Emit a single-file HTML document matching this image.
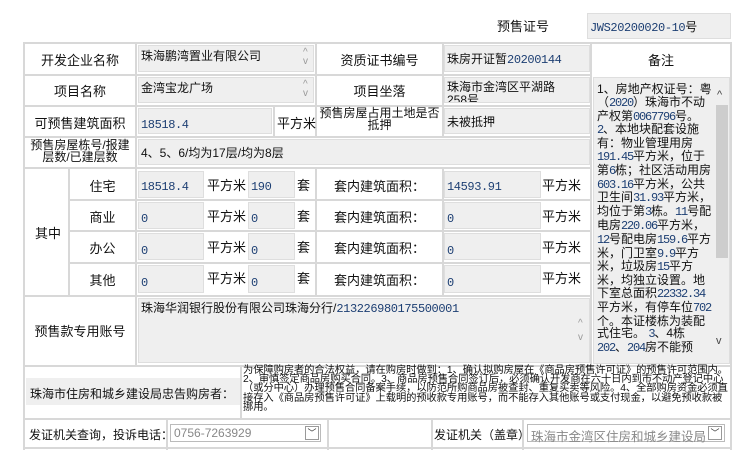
<!DOCTYPE html>
<html><head><meta charset="utf-8"><style>
*{margin:0;padding:0;box-sizing:border-box}
body{width:750px;height:450px;background:#fff;position:relative;overflow:hidden;font-family:"Liberation Sans","Noto Sans CJK SC","WenQuanYi Zen Hei",sans-serif;font-size:12px;color:#111}
div{position:absolute}
.h{height:2px;background:#d8d8d8}
.v{width:2px;background:#d8d8d8}
.f{background:#efefef;border:1px solid #dedede;padding:3px 2px;white-space:nowrap;overflow:hidden;line-height:14px}
.n{color:#1d3f73;font-family:"Liberation Mono",monospace;letter-spacing:-0.4px}
.r .n{letter-spacing:-1.2px}
.c{text-align:center}
.sb{color:#999;font-size:10px;line-height:9px}
</style></head><body>
<div style="left:497px;top:16px;font-size:13px">预售证号</div>
<div class="f" style="left:587px;top:13px;width:144px;height:26px;padding-top:6px"><span class="n">JWS20200020-10</span>号</div>

<div class="h" style="left:23px;top:42px;width:709px"></div>
<div class="h" style="left:23px;top:74px;width:568px"></div>
<div class="h" style="left:23px;top:105px;width:568px"></div>
<div class="h" style="left:23px;top:136px;width:568px"></div>
<div class="h" style="left:23px;top:167px;width:568px"></div>
<div class="h" style="left:69px;top:199px;width:522px"></div>
<div class="h" style="left:69px;top:230px;width:522px"></div>
<div class="h" style="left:69px;top:262px;width:522px"></div>
<div class="h" style="left:23px;top:295px;width:568px"></div>
<div class="h" style="left:23px;top:365px;width:709px"></div>
<div class="h" style="left:23px;top:418px;width:709px"></div>
<div class="h" style="left:23px;top:447px;width:709px"></div>
<div class="v" style="left:23px;top:42px;height:408px"></div>
<div class="v" style="left:730px;top:42px;height:408px"></div>
<div class="v" style="left:135px;top:42px;height:324px"></div>
<div class="v" style="left:315px;top:42px;height:94px"></div>
<div class="v" style="left:442px;top:42px;height:94px"></div>
<div class="v" style="left:590px;top:42px;height:324px"></div>
<div class="v" style="left:273px;top:105px;height:31px"></div>
<div class="v" style="left:68px;top:167px;height:128px"></div>
<div class="v" style="left:315px;top:167px;height:128px"></div>
<div class="v" style="left:442px;top:167px;height:128px"></div>
<div class="v" style="left:240px;top:365px;height:53px"></div>
<div class="v" style="left:166px;top:418px;height:32px"></div>
<div class="v" style="left:327px;top:418px;height:32px"></div>
<div class="v" style="left:431px;top:418px;height:32px"></div>
<div class="v" style="left:522px;top:418px;height:32px"></div>

<div class="c" style="left:25px;top:50px;width:110px;font-size:13px">开发企业名称</div>
<div class="f" style="left:138px;top:45px;width:176px;height:27px">珠海鹏湾置业有限公司</div>
<div class="sb" style="left:303px;top:48px">^<br>v</div>
<div class="c" style="left:317px;top:50px;width:125px;font-size:13px">资质证书编号</div>
<div class="f" style="left:444px;top:45px;width:146px;height:27px;padding-top:6px">珠房开证暂<span class="n">20200144</span></div>
<div class="c" style="left:592px;top:50px;width:138px;font-size:13px">备注</div>
<div class="c" style="left:25px;top:81px;width:110px;font-size:13px">项目名称</div>
<div class="f" style="left:138px;top:77px;width:176px;height:26px">金湾宝龙广场</div>
<div class="sb" style="left:303px;top:80px">^<br>v</div>
<div class="c" style="left:317px;top:81px;width:125px;font-size:13px">项目坐落</div>
<div class="f" style="left:444px;top:77px;width:146px;height:26px;line-height:13px">珠海市金湾区平湖路<br>258号</div>
<div class="c" style="left:25px;top:113px;width:110px;font-size:13px">可预售建筑面积</div>
<div class="f" style="left:138px;top:108px;width:134px;height:26px;padding-top:8px"><span class="n">18518.4</span></div>
<div style="left:277px;top:113px;font-size:13px">平方米</div>
<div class="c" style="left:317px;top:107px;width:125px;line-height:12px">预售房屋占用土地是否<br>抵押</div>
<div class="f" style="left:444px;top:108px;width:146px;height:26px;padding-top:6px">未被抵押</div>
<div class="c" style="left:25px;top:139px;width:110px;line-height:12px;font-size:12px">预售房屋栋号/报建<br>层数/已建层数</div>
<div class="f" style="left:138px;top:139px;width:452px;height:26px;padding-top:6px">4、5、6/均为17层/均为8层</div>

<div style="left:35px;top:223px;font-size:13px">其中</div>
<div class="c" style="left:70px;top:176px;width:65px;font-size:13px">住宅</div>
<div class="c" style="left:70px;top:207px;width:65px;font-size:13px">商业</div>
<div class="c" style="left:70px;top:238px;width:65px;font-size:13px">办公</div>
<div class="c" style="left:70px;top:270px;width:65px;font-size:13px">其他</div>

<div class="f" style="left:138px;top:171px;width:66px;height:27px;padding-top:7px"><span class="n">18518.4</span></div>
<div class="f" style="left:138px;top:202px;width:66px;height:27px;padding-top:8px"><span class="n">0</span></div>
<div class="f" style="left:138px;top:233px;width:66px;height:27px;padding-top:9px"><span class="n">0</span></div>
<div class="f" style="left:138px;top:265px;width:66px;height:28px;padding-top:9px"><span class="n">0</span></div>
<div style="left:207px;top:175px;font-size:13px">平方米</div>
<div style="left:207px;top:206px;font-size:13px">平方米</div>
<div style="left:207px;top:237px;font-size:13px">平方米</div>
<div style="left:207px;top:268px;font-size:13px">平方米</div>
<div class="f" style="left:248px;top:171px;width:47px;height:27px;padding-top:7px"><span class="n">190</span></div>
<div class="f" style="left:248px;top:202px;width:47px;height:27px;padding-top:8px"><span class="n">0</span></div>
<div class="f" style="left:248px;top:233px;width:47px;height:27px;padding-top:9px"><span class="n">0</span></div>
<div class="f" style="left:248px;top:265px;width:47px;height:28px;padding-top:9px"><span class="n">0</span></div>
<div style="left:297px;top:175px;font-size:13px">套</div>
<div style="left:297px;top:206px;font-size:13px">套</div>
<div style="left:297px;top:237px;font-size:13px">套</div>
<div style="left:297px;top:268px;font-size:13px">套</div>
<div class="c" style="left:317px;top:176px;width:125px;font-size:13px">套内建筑面积：</div>
<div class="c" style="left:317px;top:207px;width:125px;font-size:13px">套内建筑面积：</div>
<div class="c" style="left:317px;top:238px;width:125px;font-size:13px">套内建筑面积：</div>
<div class="c" style="left:317px;top:270px;width:125px;font-size:13px">套内建筑面积：</div>
<div class="f" style="left:444px;top:171px;width:97px;height:27px;padding-top:7px"><span class="n">14593.91</span></div>
<div class="f" style="left:444px;top:202px;width:97px;height:27px;padding-top:8px"><span class="n">0</span></div>
<div class="f" style="left:444px;top:233px;width:97px;height:27px;padding-top:9px"><span class="n">0</span></div>
<div class="f" style="left:444px;top:265px;width:97px;height:28px;padding-top:9px"><span class="n">0</span></div>
<div style="left:542px;top:175px;font-size:13px">平方米</div>
<div style="left:542px;top:206px;font-size:13px">平方米</div>
<div style="left:542px;top:237px;font-size:13px">平方米</div>
<div style="left:542px;top:268px;font-size:13px">平方米</div>

<div class="c" style="left:25px;top:321px;width:110px;font-size:13px">预售款专用账号</div>
<div class="f" style="left:138px;top:298px;width:452px;height:65px;padding-top:2px">珠海华润银行股份有限公司珠海分行/<span class="n">213226980175500001</span></div>
<div class="sb" style="left:578px;top:317px;line-height:14px">^<br>v</div>

<div class="f r" style="left:593px;top:77px;width:137px;height:287px;white-space:normal;line-height:12.8px;padding:5px 16px 0 3px;font-size:12px">1、房地产权证号：粤（<span class="n">2020</span>）珠海市不动产权第<span class="n">0067796</span>号。<span class="n">2</span>、本地块配套设施有：物业管理用房<span class="n">191.45</span>平方米，位于第<span class="n">6</span>栋；社区活动用房<span class="n">603.16</span>平方米，公共卫生间<span class="n">31.93</span>平方米，均位于第<span class="n">3</span>栋。<span class="n">11</span>号配电房<span class="n">220.06</span>平方米，<span class="n">12</span>号配电房<span class="n">159.6</span>平方米，门卫室<span class="n">9.9</span>平方米，垃圾房<span class="n">15</span>平方米，均独立设置。地下室总面积<span class="n">22332.34</span>平方米，有停车位<span class="n">702</span>个。本证楼栋为装配式住宅。 <span class="n">3</span>、4栋<span class="n">202</span>、<span class="n">204</span>房不能预</div>
<div style="left:716px;top:105px;width:12px;height:153px;background:#cdcdcd"></div>
<div style="left:717px;top:89px;font-size:11px;color:#444">^</div>
<div style="left:716px;top:335px;font-size:11px;color:#444">v</div>

<div style="left:26px;top:378px;width:214px;height:27px;background:#efefef;padding:7px 0 0 4px;font-size:12px;white-space:nowrap">珠海市住房和城乡建设局忠告购房者：</div>
<div style="left:243px;top:366px;width:488px;font-size:10.3px;line-height:9.2px;letter-spacing:-0.1px">为保障购房者的合法权益，请在购房时做到：1、确认拟购房屋在《商品房预售许可证》的预售许可范围内。2、审慎签定商品房购买合同。3、商品房预售合同签订后，必须确认开发商在六十日内到市不动产登记中心（或分中心）办理预售合同备案手续，以防范所购商品房被查封、重复买卖等风险。4、全部购房资金必须直接存入《商品房预售许可证》上载明的预收款专用账号，而不能存入其他账号或支付现金，以避免预收款被挪用。</div>

<div style="left:29px;top:426px;font-size:12px">发证机关查询，投诉电话：</div>
<div style="left:170px;top:424px;width:151px;height:18px;border:1px solid #bbb;color:#888;font-size:12px;padding:1px 3px">0756-7263929</div>
<div style="left:305px;top:426px;width:14px;height:14px;border:1px solid #999;font-size:9px;text-align:center;line-height:12px;color:#333">﹀</div>
<div style="left:434px;top:426px;font-size:12px">发证机关（盖章）</div>
<div style="left:527px;top:424px;width:198px;height:18px;border:1px solid #bbb;color:#888;font-size:12.5px;padding:1px 3px;white-space:nowrap">珠海市金湾区住房和城乡建设局</div>
<div style="left:708px;top:426px;width:14px;height:14px;border:1px solid #999;font-size:9px;text-align:center;line-height:12px;color:#333">﹀</div>
</body></html>
